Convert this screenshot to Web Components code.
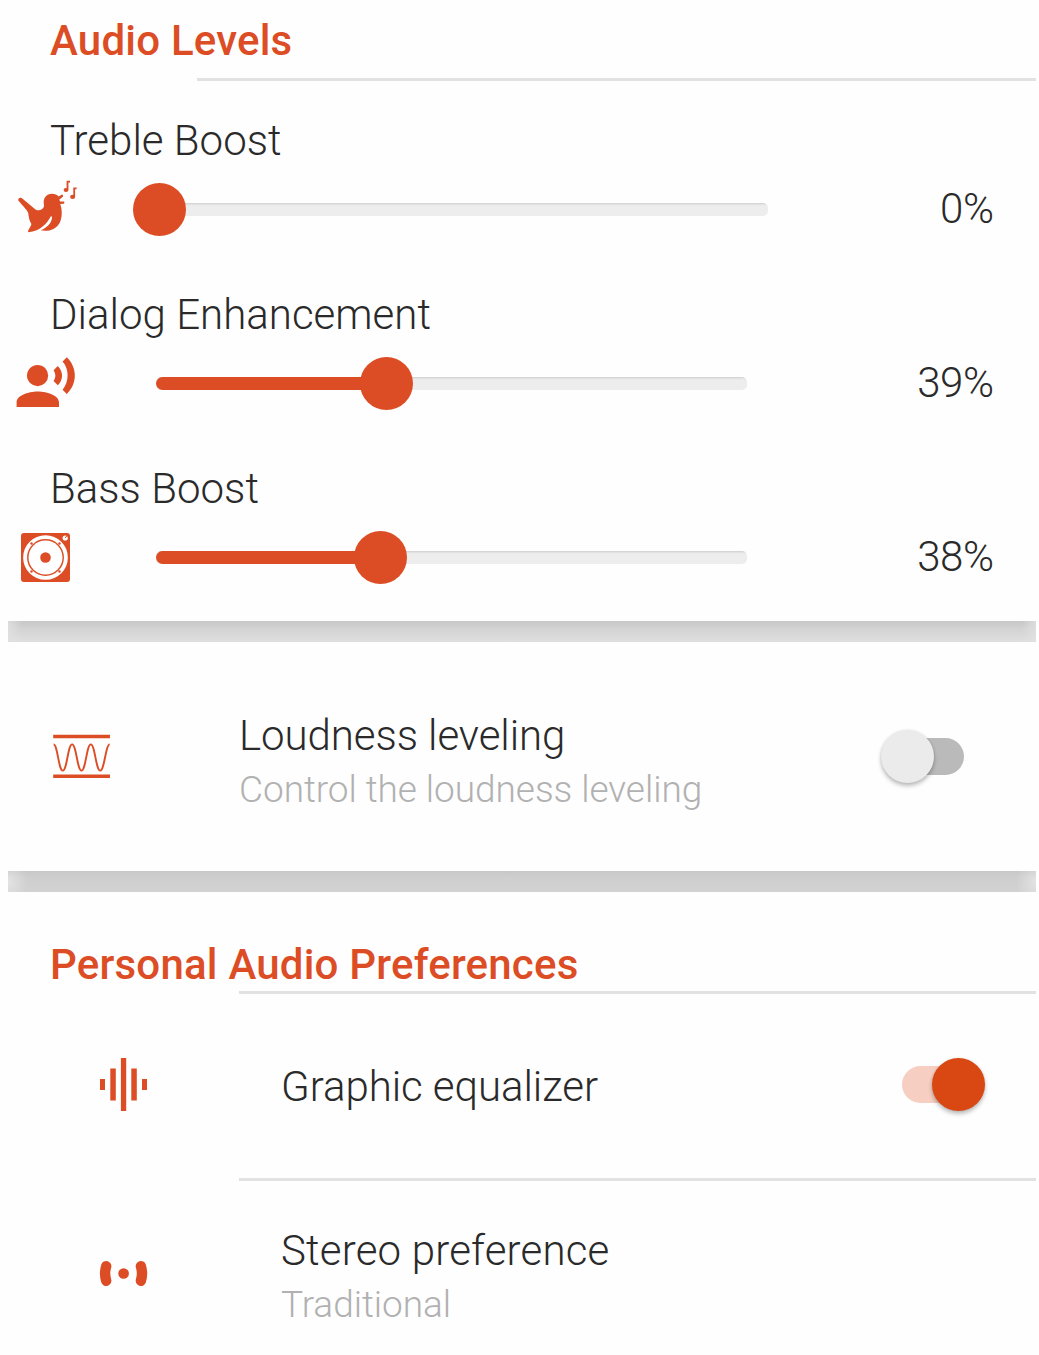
<!DOCTYPE html>
<html lang="en">
<head>
<meta charset="utf-8">
<title>Audio settings</title>
<style>
html,body{margin:0;background:#fefefe}
body{font-family:Roboto,"Liberation Sans",sans-serif;--accent:#dc4d25}
</style>
</head>
<body>
<audio-settings></audio-settings>
<script>
const icons = {
bird:`<svg width="62" height="55" viewBox="17 182 62 55"><path fill="currentColor" d="M18.3 200.4C17.9 198.2 20 197 22 198.2C27 202 31 206 35.5 209.4C37.5 210.6 39.8 210.6 41.8 209.3C43.5 208 44.3 206.8 43.9 204.5C42.8 198 46.5 193.8 52 193.8C54.8 193.8 57.2 195 58.6 196.4L62 194.6C63 194.8 63.3 195.8 62.8 196.8L59.2 199.8L60.2 201.4L63.8 201.6C64.7 202.2 64.6 203.3 63.8 203.7L60.2 204.1C62.2 209 62.6 217.5 59.6 222.9C56 229.5 48 231.9 40.8 230.3C46.8 227.5 51.9 223.5 52.1 216.7L50.9 216.3C47.2 223 41 231 28.2 232.3C27.4 230 31 227 31.4 224C29 220.2 28.8 216.5 28.2 213C27 209.5 22.5 205.5 18.3 200.4Z"/><path fill="none" stroke="currentColor" stroke-width="1.8" d="M67.5 190V181.6H70M74.2 197V188.4H76.6"/><ellipse cx="66" cy="190.1" rx="2.4" ry="2" fill="currentColor"/><ellipse cx="72.6" cy="196.9" rx="2.5" ry="2.1" fill="currentColor"/></svg>`,
voice:`<svg width="62" height="55" viewBox="15 356 62 55"><g fill="currentColor"><circle cx="37.6" cy="375.6" r="10.6"/><path d="M16.6 407V402.3C16.6 395.5 28 391.4 37.8 391.4S59 395.5 59 402.3V407ZM57.8 365.9L53.6 370.3C56 374 56 377.5 53.6 380.9L57.8 385.3C63.5 379.5 63.5 371.8 57.8 365.9ZM66.8 357.3L62.6 361.6C69.3 369 69.3 382 62.6 389.7L66.8 393.9C77.5 384 77.5 367.5 66.8 357.3Z"/></g></svg>`,
speaker:`<svg width="49" height="49" viewBox="21 533 49 49"><rect x="21" y="533" width="49" height="49" rx="3" fill="currentColor"/><circle cx="45.5" cy="557.5" r="20.4" fill="none" stroke="#fff" stroke-width="3.9"/><circle cx="45.5" cy="557.5" r="17" fill="#fff"/><circle cx="45.5" cy="557.5" r="5.3" fill="currentColor"/><g fill="currentColor"><circle cx="31.5" cy="543.5" r="1.2"/><circle cx="59.5" cy="543.5" r="1.2"/><circle cx="31.5" cy="571.5" r="1.2"/><circle cx="59.5" cy="571.5" r="1.2"/></g><circle cx="65.2" cy="538" r="2.6" fill="#fff"/><path d="M65 538L67 535.8" stroke="currentColor" stroke-width="1"/></svg>`,
wave:`<svg width="58" height="43" viewBox="53 735 58 43"><path d="M53.2 736.6H110M53.2 776.3H110" stroke="currentColor" stroke-width="3.5"/><path fill="none" stroke="currentColor" stroke-width="1.9" d="M53.6 744.4C57.6 744.4 58.5 770.6 62.8 770.6S67.8 744.4 72.1 744.4S77.2 770.6 81.5 770.6S86.6 744.4 90.8 744.4S95.9 770.6 100.2 770.6S105.6 744.4 109.7 744.4"/></svg>`,
bars:`<svg width="48" height="53" viewBox="100 1058 48 53"><path fill="currentColor" d="M100 1079h5v11h-5zM110.3 1068.5h5.5v32h-5.5zM120.9 1058h5.3v53h-5.3zM131.3 1068.5h5.5v32h-5.5zM142 1079h5v11h-5z"/></svg>`,
stereo:`<svg width="50" height="30" viewBox="99 1258 50 30"><path fill="none" stroke="currentColor" stroke-width="10.4" stroke-linecap="round" d="M106.2 1266.2Q104 1273.5 106.2 1280.8M140.9 1266.2Q143.1 1273.5 140.9 1280.8"/><circle cx="123.6" cy="1273.5" r="5.3" fill="currentColor"/></svg>`
};
function component(name, render) {
  customElements.define(name, class extends HTMLElement {
    connectedCallback() {
      if (this.shadowRoot) return;
      this.attachShadow({mode:'open'}).innerHTML = render(this);
    }
  });
}
component('ui-icon', e => `<style>:host{display:flex;flex:none;color:var(--accent)}svg{display:block;overflow:visible}</style>${icons[e.getAttribute('name')]}`);
component('section-title', e => `<style>:host{display:block;padding-left:50px;font-size:42px;line-height:50px;font-weight:500;letter-spacing:.21px;color:var(--accent);white-space:nowrap}</style><slot></slot>`);
component('list-divider', e => `<style>:host{display:block;height:3px;background:#e2e2e2;margin-left:${e.getAttribute('inset')}px;margin-right:3px}</style>`);
component('level-row', e => {
  const start = +e.getAttribute('start'), end = +e.getAttribute('end'), pos = +e.getAttribute('thumb');
  return `<style>
  :host{display:block;height:139px;padding-top:35px;color:#2a2a2a}
  .label{padding-left:50px;font-size:42px;line-height:50px;font-weight:300;letter-spacing:.02px}
  .row{display:flex;align-items:center;height:87px}
  .icon{flex:none;box-sizing:border-box;width:${start}px;padding-left:${e.getAttribute('icon-x')}px}
  .track{position:relative;flex:none;width:${end-start}px;height:13px;border-radius:5px;background:linear-gradient(#cfcfcf 0,#e4e4e4 1.6px,#ededed 3px)}
  .fill{height:13px;width:${Math.max(0,pos-start)}px;border-radius:6.5px;background:var(--accent)}
  .thumb{position:absolute;left:${pos-start-26.5}px;top:-20px;width:53px;height:53px;border-radius:50%;background:var(--accent)}
  .value{flex:1;text-align:right;padding:0 45.5px 2px 0;font-size:42px;line-height:50px;font-weight:300;letter-spacing:-.45px}
  </style><div class="label"><slot></slot></div><div class="row"><div class="icon"><ui-icon name="${e.getAttribute('icon')}"></ui-icon></div><div class="track"><div class="fill"></div><div class="thumb"></div></div><div class="value">${e.getAttribute('value')}</div></div>`;
});
component('card-gap', e => `<style>
  :host{display:block;height:21px;margin:0 3px 0 8px;background:${e.hasAttribute('deep')
  ? 'radial-gradient(ellipse 20px 22px at 0 50%,rgba(255,255,255,.42),rgba(255,255,255,0)),radial-gradient(ellipse 20px 22px at 100% 50%,rgba(255,255,255,.42),rgba(255,255,255,0)),linear-gradient(#c8c8c8,#cecece 7px,#d2d2d2)'
  : 'linear-gradient(90deg,rgba(225,225,225,.8),rgba(225,225,225,0) 14px calc(100% - 14px),rgba(225,225,225,.8)),linear-gradient(#c7c7c7,#d3d3d3 8px,#dfdfdf)'}}</style>`);
component('ui-switch', e => { const on = e.hasAttribute('on'); return `<style>
  :host{display:flex;flex:none;width:83px;height:53px;align-items:center;justify-content:${on?'flex-start':'flex-end'};position:relative}
  .bar{width:72px;height:37px;border-radius:19px;background:${on?'#f6cec2':'#bababa'}}
  .knob{position:absolute;top:0;${on?'right':'left'}:0;width:53px;height:53px;border-radius:50%;background:${on?'#d94713':'#ebebeb'};box-shadow:0 3px 4px rgba(0,0,0,.25),0 0 3px rgba(0,0,0,.09)}
  </style><div class="bar"></div><div class="knob"></div>`; });
component('setting-row', e => `<style>
  :host{display:flex;align-items:center;box-sizing:border-box}
  .icon{flex:none;box-sizing:border-box;width:${e.getAttribute('text-x')}px;padding-left:${e.getAttribute('icon-x')}px}
  .copy{flex:1;font-weight:300;white-space:nowrap;padding-top:${e.getAttribute('drop')}px}
  .title{font-size:42px;line-height:50px;color:#2a2a2a;letter-spacing:${e.getAttribute('tracking')}px}
  ::slotted([slot=note]){display:block;font-size:37px;line-height:44px;padding-top:7px;color:#b1b1b1;letter-spacing:-.06px}
  </style><div class="icon"><ui-icon name="${e.getAttribute('icon')}"></ui-icon></div><div class="copy"><div class="title"><slot></slot></div><slot name="note"></slot></div><slot name="control"></slot>`);
component('audio-settings', () => `<style>
  :host{display:flex;flex-direction:column;width:1039px;height:1355px;overflow:hidden}
  :host>*{flex:none}
  .levels{height:605px;padding-top:16px}
  .levels list-divider{margin-top:12px}
  .loud{height:229px}
  .loud ui-switch{margin-right:75px}
  .personal{padding-top:48px}
  .personal section-title{padding-bottom:1px}
  .eq{height:184px;padding-bottom:3px}.eq ui-switch{margin-right:54px}
  .st{height:184px}
  </style>
  <section class="levels"><section-title>Audio Levels</section-title><list-divider inset="197"></list-divider>
  <level-row icon="bird" icon-x="17" start="136" end="768" thumb="159.5" value="0%">Treble Boost</level-row>
  <level-row icon="voice" icon-x="15" start="156" end="747" thumb="386.5" value="39%">Dialog Enhancement</level-row>
  <level-row icon="speaker" icon-x="21" start="156" end="747" thumb="380.5" value="38%">Bass Boost</level-row></section>
  <card-gap></card-gap>
  <setting-row class="loud" icon="wave" icon-x="53" text-x="239" drop="10" tracking="-.07">Loudness leveling<span slot="note">Control the loudness leveling</span><ui-switch slot="control"></ui-switch></setting-row>
  <card-gap deep></card-gap>
  <section class="personal"><section-title>Personal Audio Preferences</section-title><list-divider inset="239"></list-divider>
  <setting-row class="eq" icon="bars" icon-x="100" text-x="281" drop="5" tracking="-.05">Graphic equalizer<ui-switch on slot="control"></ui-switch></setting-row>
  <list-divider inset="239"></list-divider>
  <setting-row class="st" icon="stereo" icon-x="99" text-x="281" drop="6" tracking=".19">Stereo preference<span slot="note">Traditional</span></setting-row></section>`);
</script>
</body>
</html>
